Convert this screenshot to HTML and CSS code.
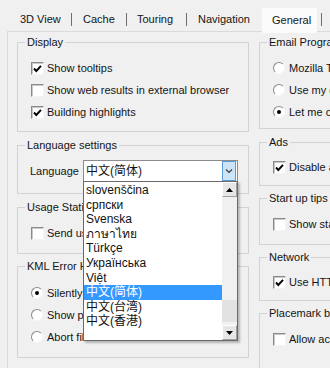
FILE: index.html
```html
<!DOCTYPE html>
<html>
<head>
<meta charset="utf-8">
<link rel="stylesheet" href="styles.css">
</head>
<body>
<div class="window">
  <div class="tabs">
    <div class="tab t1">3D View</div><span class="sep"></span>
    <div class="tab t2">Cache</div><span class="sep"></span>
    <div class="tab t3">Touring</div><span class="sep"></span>
    <div class="tab t4">Navigation</div>
    <div class="tab active">General</div><span class="sep sep-last"></span>
  </div>
  <div class="page">
    <div class="col left">
      <div class="group g-display">
        <div class="gt">Display</div>
        <div class="row"><span class="cb on"><svg viewBox="0 0 11 11" width="11" height="11"><polyline points="2,5.5 4.3,8 9,2.8" /></svg></span>Show tooltips</div>
        <div class="row"><span class="cb"></span>Show web results in external browser</div>
        <div class="row"><span class="cb on"><svg viewBox="0 0 11 11" width="11" height="11"><polyline points="2,5.5 4.3,8 9,2.8" /></svg></span>Building highlights</div>
      </div>
      <div class="group g-lang">
        <div class="gt">Language settings</div>
        <div class="row lang-row">
          <span class="label">Language</span>
          <div class="select">
            <span class="sel-text">中文(简体)</span>
            <span class="dd"><svg viewBox="0 0 10 10" width="10" height="10"><polyline points="2,3.5 5,6.5 8,3.5" /></svg></span>
            <div class="listbox">
              <div class="items">
                <div class="item">slovenščina</div>
                <div class="item">српски</div>
                <div class="item">Svenska</div>
                <div class="item">ภาษาไทย</div>
                <div class="item">Türkçe</div>
                <div class="item">Українська</div>
                <div class="item">Việt</div>
                <div class="item selected">中文(简体)</div>
                <div class="item">中文(台湾)</div>
                <div class="item">中文(香港)</div>
              </div>
              <div class="scrollbar">
                <div class="sb-btn"><svg viewBox="0 0 7 4" width="7" height="4"><polygon points="0,4 3.5,0 7,4" /></svg></div>
                <div class="sb-track"><div class="sb-thumb"></div></div>
                <div class="sb-btn"><svg viewBox="0 0 7 4" width="7" height="4"><polygon points="0,0 7,0 3.5,4" /></svg></div>
              </div>
            </div>
          </div>
        </div>
      </div>
      <div class="group g-usage">
        <div class="gt">Usage Statistics</div>
        <div class="row"><span class="cb"></span>Send usage statistics to Google</div>
      </div>
      <div class="group g-kml">
        <div class="gt">KML Error Handling</div>
        <div class="row"><span class="rb on"></span>Silently accept all errors</div>
        <div class="row"><span class="rb"></span>Show prompts for all errors</div>
        <div class="row"><span class="rb"></span>Abort file load on first error</div>
      </div>
    </div>
    <div class="col right">
      <div class="group g-email">
        <div class="gt">Email Program</div>
        <div class="row"><span class="rb"></span>Mozilla Thunderbird</div>
        <div class="row"><span class="rb"></span>Use my default email</div>
        <div class="row"><span class="rb on"></span>Let me choose</div>
      </div>
      <div class="group g-ads">
        <div class="gt">Ads</div>
        <div class="row"><span class="cb on"><svg viewBox="0 0 11 11" width="11" height="11"><polyline points="2,5.5 4.3,8 9,2.8" /></svg></span>Disable ads</div>
      </div>
      <div class="group g-start">
        <div class="gt">Start up tips</div>
        <div class="row"><span class="cb"></span>Show start up tips</div>
      </div>
      <div class="group g-net">
        <div class="gt">Network</div>
        <div class="row"><span class="cb on"><svg viewBox="0 0 11 11" width="11" height="11"><polyline points="2,5.5 4.3,8 9,2.8" /></svg></span>Use HTTPS</div>
      </div>
      <div class="group g-place">
        <div class="gt">Placemark balloons</div>
        <div class="row"><span class="cb"></span>Allow access to local files</div>
      </div>
    </div>
  </div>
</div>
</body>
</html>
```
FILE: styles.css
```css
* { box-sizing: border-box; }
html, body { margin: 0; padding: 0; }
body {
  width: 330px;
  height: 368px;
  overflow: hidden;
  background: #f0f0f0;
  font-family: "Liberation Sans", "Noto Sans CJK JP", sans-serif;
  font-size: 11px;
  line-height: 13px;
  color: #141414;
}
.window { padding-top: 8px; width: 330px; height: 368px; overflow: hidden; }

.tabs {
  display: flex;
  align-items: center;
  height: 23px;
  padding-left: 8px;
  white-space: nowrap;
}
.tab { height: 23px; display: flex; align-items: center; }
.t1 { width: 63px; padding-left: 12px; }
.t2 { width: 54px; padding-left: 11px; }
.t3 { width: 59px; padding-left: 10px; }
.t4 { width: 75px; padding-left: 11px; }
.active {
  width: 55px;
  padding-left: 10px;
  background: #fbfbfb;
  height: 25px;
  margin-top: 2px;
}
.sep { width: 1px; height: 13px; background: #707070; flex-shrink: 0; }
.sep-last { margin-left: 4px; }

.page {
  margin-left: 7px;
  border-top: 1px solid #dadada;
  border-left: 1px solid #dadada;
  padding: 10px 0 0 9px;
  display: flex;
  gap: 10px;
  height: 340px;
}
.col { display: flex; flex-direction: column; flex-shrink: 0; }
.left { width: 232px; }
.right { width: 140px; }

.group {
  border: 1px solid #d3d3d3;
  position: relative;
}
.gt {
  margin: -7px 0 8px 7px;
  padding: 0 2px;
  background: #f0f0f0;
  width: max-content;
  line-height: 13px;
  white-space: nowrap;
}
.row {
  height: 22px;
  display: flex;
  align-items: center;
  padding-left: 13px;
  white-space: nowrap;
}

.g-display { height: 90px; margin-bottom: 13px; }
.g-lang { height: 49px; margin-bottom: 13px; z-index: 2; }
.g-usage { height: 47px; margin-bottom: 12px; }
.g-kml { height: 92px; }
.g-kml .gt { margin-bottom: 9px; }

.g-email { height: 90px; margin-bottom: 13px; }
.g-ads { height: 46px; margin-bottom: 12px; }
.g-start { height: 48px; margin-bottom: 12px; }
.g-net { height: 46px; margin-bottom: 12px; }
.g-place { height: 60px; }

.cb {
  width: 13px;
  height: 13px;
  margin-right: 3px;
  flex-shrink: 0;
  background: #fff;
  border: 1px solid;
  border-color: #8a8a8a #f4f4f4 #f4f4f4 #8a8a8a;
  box-shadow: inset 1px 1px 0 #c9c9c9;
  display: flex;
  align-items: center;
  justify-content: center;
}
.cb svg polyline { fill: none; stroke: #000; stroke-width: 1.9; }

.rb {
  width: 12px;
  height: 12px;
  margin-right: 4px;
  flex-shrink: 0;
  border-radius: 50%;
  background: #fff;
  border: 1px solid;
  border-color: #8a8a8a #f7f7f7 #f7f7f7 #8a8a8a;
  position: relative;
}
.rb.on::after {
  content: "";
  position: absolute;
  left: 3px;
  top: 3px;
  width: 4px;
  height: 4px;
  border-radius: 50%;
  background: #000;
}

.lang-row { padding-left: 12px; margin-top: 2px; }
.label { width: 53px; flex-shrink: 0; }
.select {
  position: relative;
  width: 155px;
  height: 22px;
  background: #fff;
  border: 1px solid #8c8c8c;
  display: flex;
  align-items: center;
  font-size: 12px;
}
.sel-text { padding-left: 2px; flex: 1; }
.dd {
  width: 14px;
  height: 20px;
  background: #cce4f7;
  border: 1px solid #5a9bd8;
  display: flex;
  align-items: center;
  justify-content: center;
  margin-right: 1px;
}
.dd svg polyline { fill: none; stroke: #3c3c3c; stroke-width: 1.2; }

.listbox {
  position: absolute;
  left: -1px;
  top: 20px;
  width: 155px;
  height: 160px;
  background: #fff;
  border: 1px solid #6a6a6a;
  box-shadow: 2px 2px 2px rgba(0,0,0,0.25);
  display: flex;
  z-index: 5;
}
.items { flex: 1; padding-top: 1px; }
.item {
  height: 14.6px;
  line-height: 14.6px;
  padding-left: 2px;
  white-space: nowrap;
  color: #111;
}
.item.selected { background: #3399ff; color: #fff; }

.scrollbar {
  width: 15px;
  display: flex;
  flex-direction: column;
  background: #f0f0f0;
}
.sb-btn {
  height: 15px;
  background: #e6e6e6;
  border-right: 1px solid #a0a0a0;
  border-bottom: 1px solid #a0a0a0;
  border-top: 1px solid #fff;
  border-left: 1px solid #fff;
  display: flex;
  align-items: center;
  justify-content: center;
}
.sb-btn svg polygon { fill: #000; }
.sb-track {
  flex: 1;
  display: flex;
  flex-direction: column;
  justify-content: flex-end;
  padding-bottom: 3px;
}
.sb-thumb {
  height: 22px;
  background: #e2e2e2;
}
```
